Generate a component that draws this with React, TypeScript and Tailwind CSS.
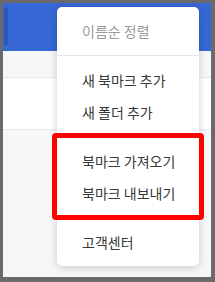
import React from "react";

const font = { fontFamily: '"Noto Sans CJK KR", "Noto Sans", sans-serif' };

function Item({ label, muted }: { label: string; muted?: boolean }) {
  return (
    <div
      className={`h-[32px] flex items-center pl-[25px] text-[14px] leading-none ${
        muted ? "text-[#9a9a9a]" : "text-[#383838]"
      }`}
    >
      {label}
    </div>
  );
}

export default function App() {
  return (
    <div
      className="w-[215px] h-[282px] bg-[#6a6a6a] pt-[3px] pl-[3px] pr-[4px] pb-[5px] overflow-hidden"
      style={font}
    >
      <div className="relative w-full h-full flex flex-col bg-[#f6f7f9] overflow-hidden">
        <div className="h-[48px] bg-[#3568d4] flex items-start pt-[5px] shrink-0">
          <div className="w-[4px] h-[37px] ml-[1px] bg-[#2b57b8]" />
        </div>
        <div className="h-[27px] bg-[#f6f7f9] border-b border-[#e6e7ea] shrink-0" />
        <div className="h-[52px] bg-white border-b border-[#e6e7ea] shrink-0" />
        <div className="flex-1 bg-[#f6f7f9]" />

        {/* dropdown menu */}
        <div className="absolute left-[54px] top-[4px] w-[142px] bg-white rounded-[5px] shadow-[0_2px_8px_rgba(0,0,0,0.18)] flex flex-col">
          <div className="py-[8px]">
            <Item label="이름순 정렬" muted />
          </div>
          <div className="h-px bg-[#e3e3e3]" />
          <div className="py-[8px]">
            <Item label="새 북마크 추가" />
            <Item label="새 폴더 추가" />
          </div>
          <div className="h-px bg-[#e3e3e3]" />
          <div className="py-[8px]">
            <Item label="북마크 가져오기" />
            <Item label="북마크 내보내기" />
          </div>
          <div className="h-px bg-[#e3e3e3]" />
          <div className="py-[8px]">
            <Item label="고객센터" />
          </div>
        </div>

        {/* red annotation box */}
        <div className="absolute left-[49px] top-[130px] w-[152px] h-[87px] border-[5px] border-[#ff0000] rounded-[4px]" />
      </div>
    </div>
  );
}
